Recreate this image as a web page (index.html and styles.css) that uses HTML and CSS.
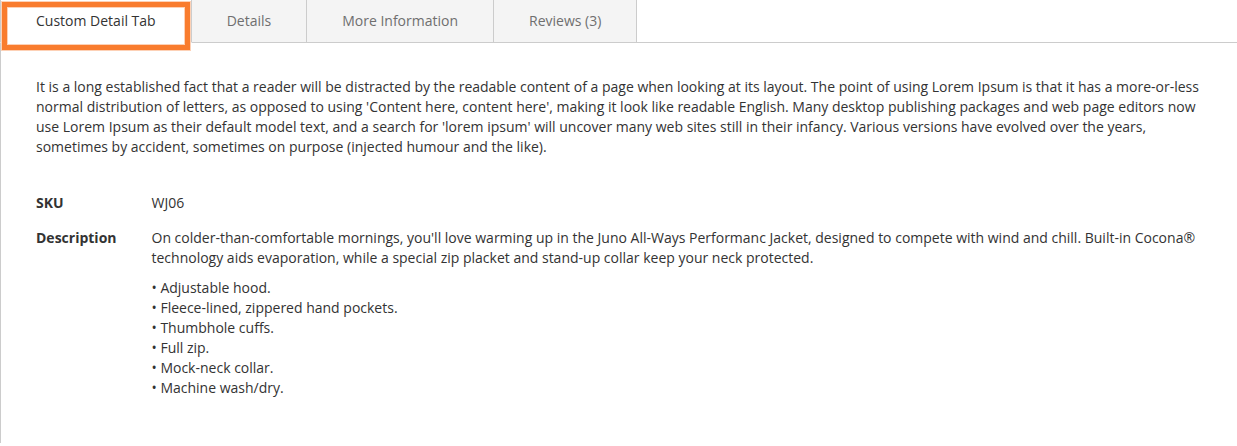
FILE: index.html
```html
<!DOCTYPE html>
<html>
<head>
<meta charset="utf-8">
<link rel="stylesheet" href="styles.css">
</head>
<body>
<div class="product-tabs">
  <div class="tabs">
    <div class="tab active">Custom Detail Tab<span class="highlight"></span></div>
    <div class="tab">Details</div>
    <div class="tab">More Information</div>
    <div class="tab">Reviews (3)</div>
    <div class="tab-rest"></div>
  </div>
  <div class="panel">
    <p class="intro">It is a long established fact that a reader will be distracted by the readable content of a page when looking at its layout. The point of using Lorem Ipsum is that it has a more-or-less normal distribution of letters, as opposed to using 'Content here, content here', making it look like readable English. Many desktop publishing packages and web page editors now use Lorem Ipsum as their default model text, and a search for 'lorem ipsum' will uncover many web sites still in their infancy. Various versions have evolved over the years, sometimes by accident, sometimes on purpose (injected humour and the like).</p>
    <table class="attributes">
      <tbody>
        <tr>
          <th>SKU</th>
          <td>WJ06</td>
        </tr>
        <tr>
          <th>Description</th>
          <td>
            <p class="desc">On colder-than-comfortable mornings, you'll love warming up in the Juno All-Ways Performanc Jacket, designed to compete with wind and chill. Built-in Cocona® technology aids evaporation, while a special zip placket and stand-up collar keep your neck protected.</p>
            <p class="bullets">• Adjustable hood.<br>• Fleece-lined, zippered hand pockets.<br>• Thumbhole cuffs.<br>• Full zip.<br>• Mock-neck collar.<br>• Machine wash/dry.</p>
          </td>
        </tr>
      </tbody>
    </table>
  </div>
</div>
</body>
</html>
```

FILE: styles.css
```css
html, body {
  margin: 0;
  padding: 0;
  background: #fff;
  overflow: hidden;
}

body {
  font-family: "Open Sans", "Liberation Sans", sans-serif;
  font-size: 14px;
  line-height: 20px;
  color: #333;
}

.product-tabs {
  width: 1238px;
}

.tabs {
  display: flex;
  align-items: stretch;
  height: 43px;
}

.tab {
  position: relative;
  box-sizing: border-box;
  height: 43px;
  padding: 0 35px;
  line-height: 41px;
  border: 1px solid #cccccc;
  border-top: 0;
  background: #f4f4f4;
  color: #6f6f6f;
  margin-right: -1px;
  white-space: nowrap;
}

.tab.active {
  background: #fff;
  color: #333;
  border-bottom-color: #fff;
  z-index: 1;
}

.tab-rest {
  flex: 1;
  border-bottom: 1px solid #cccccc;
}

.highlight {
  position: absolute;
  left: 1px;
  top: 2px;
  width: 188px;
  height: 48px;
  box-sizing: border-box;
  border: 5px solid #f97c2e;
  box-shadow: 0 0 0 1px rgba(249, 124, 46, 0.35), inset 0 0 0 1px rgba(249, 124, 46, 0.35);
  pointer-events: none;
}

.panel {
  border-left: 1px solid #cccccc;
  padding: 34px 36px 35px 35px;
}

.intro {
  margin: 0;
}

.attributes {
  border-collapse: collapse;
  margin-top: 30px;
  width: 100%;
}

.attributes th {
  text-align: left;
  vertical-align: top;
  font-weight: 700;
  padding: 5.5px 30px 10px 0;
  white-space: nowrap;
  width: 1px;
}

.attributes td {
  vertical-align: top;
  padding: 5.5px 5px 10px 5px;
}

.desc {
  margin: 0 0 10px 0;
}

.bullets {
  margin: 0;
}
```
